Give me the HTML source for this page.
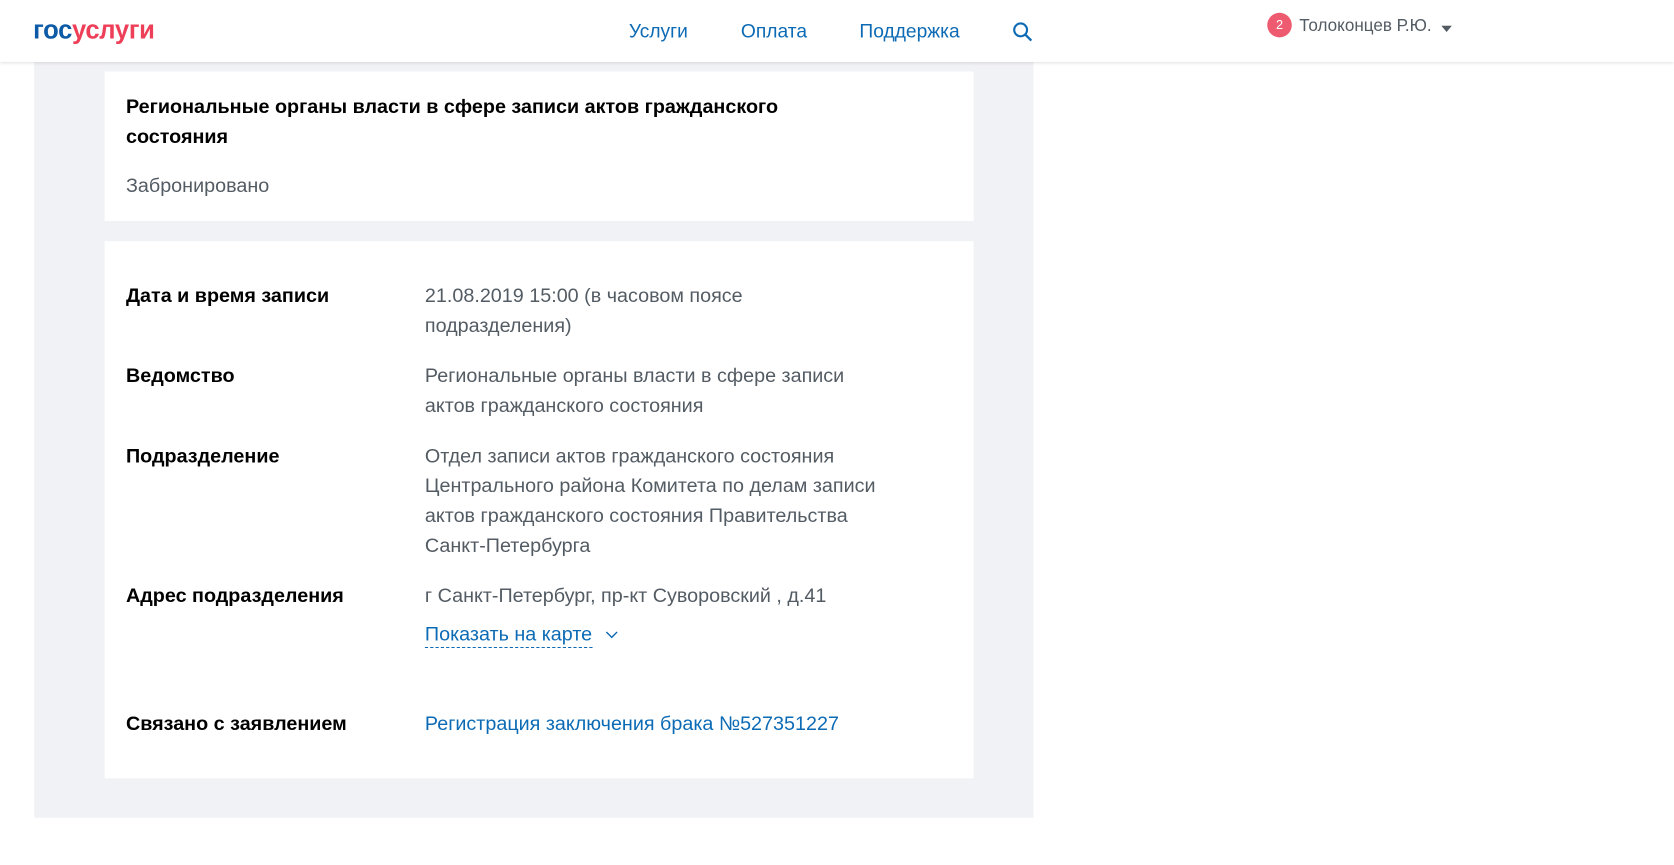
<!DOCTYPE html>
<html><head><meta charset="utf-8"><style>
*{margin:0;padding:0;box-sizing:border-box}
body{width:1674px;height:865px;background:#fff;font-family:"Liberation Sans",sans-serif;position:relative;overflow:hidden}
#w{position:absolute;left:0;top:0;width:1568px;height:810px;transform:scale(1.0676);transform-origin:0 0}
.hdr{position:absolute;left:0;top:0;width:1568px;height:58px;background:#fff;box-shadow:0 1px 3px rgba(0,0,0,.12);z-index:2}
.logo{position:absolute;left:31px;top:15px;font-size:24px;font-weight:bold;letter-spacing:-0.3px}
.nav{position:absolute;top:19px;font-size:18px;color:#0d6bb5}
.badge{position:absolute;left:1187px;top:12px;width:23px;height:23px;border-radius:12px;background:#ee5a6f;color:#fff;font-size:12px;text-align:center;line-height:23px}
.user{position:absolute;left:1217px;top:16px;font-size:16px;color:#535b63}
.panel{position:absolute;left:32px;top:58px;width:936px;height:708px;background:#f1f2f5}
.card{position:absolute;left:98px;width:814px;background:#fff}
.t{position:absolute;font-size:18.5px;line-height:28px}
.b{font-weight:bold;color:#000}
.g{color:#535b63}
.l{color:#0d6bb5}
</style></head><body><div id="w">
<div class="hdr">
<div class="logo"><span style="color:#0d5aa7">гос</span><span style="color:#ee3f58">услуги</span></div>
<div class="nav" style="left:589px">Услуги</div>
<div class="nav" style="left:694px">Оплата</div>
<div class="nav" style="left:805px">Поддержка</div>
<svg style="position:absolute;left:948px;top:20px" width="20" height="20" viewBox="0 0 20 20"><circle cx="8" cy="8" r="6" fill="none" stroke="#0d6bb5" stroke-width="2"/><path d="M12.5 12.5L18 18" stroke="#0d6bb5" stroke-width="2.2"/></svg>
<div class="badge">2</div>
<div class="user">Толоконцев Р.Ю.</div>
<svg style="position:absolute;left:1350px;top:24px" width="10" height="6"><path d="M0 0H10L5 6Z" fill="#535b63"/></svg>
</div>
<div class="panel"></div>
<div class="card" style="top:67px;height:140px"></div>
<div class="card" style="top:226px;height:503px"></div>
<div class="t b" style="left:118px;top:86px;width:680px">Региональные органы власти в сфере записи актов гражданского состояния</div>
<div class="t g" style="left:118px;top:160px">Забронировано</div>
<div class="t b" style="left:118px;top:263px">Дата и время записи</div>
<div class="t g" style="left:398px;top:263px;width:350px">21.08.2019 15:00 (в часовом поясе подразделения)</div>
<div class="t g" style="left:398px;top:338px;width:430px">Региональные органы власти в сфере записи актов гражданского состояния</div>
<div class="t b" style="left:118px;top:338px">Ведомство</div>
<div class="t b" style="left:118px;top:413px">Подразделение</div>
<div class="t g" style="left:398px;top:413px;width:450px">Отдел записи актов гражданского состояния Центрального района Комитета по делам записи актов гражданского состояния Правительства Санкт-Петербурга</div>
<div class="t b" style="left:118px;top:544px">Адрес подразделения</div>
<div class="t g" style="left:398px;top:544px">г Санкт-Петербург, пр-кт Суворовский , д.41</div>
<div class="t l" style="left:398px;top:582px;border-bottom:1px dashed #0d6bb5;line-height:24px">Показать на карте</div>
<svg style="position:absolute;left:567px;top:591px" width="12" height="8"><path d="M1 1L6 6L11 1" fill="none" stroke="#0d6bb5" stroke-width="1.3"/></svg>
<div class="t b" style="left:118px;top:664px">Связано с заявлением</div>
<div class="t l" style="left:398px;top:664px">Регистрация заключения брака №527351227</div>
</div></body></html>
